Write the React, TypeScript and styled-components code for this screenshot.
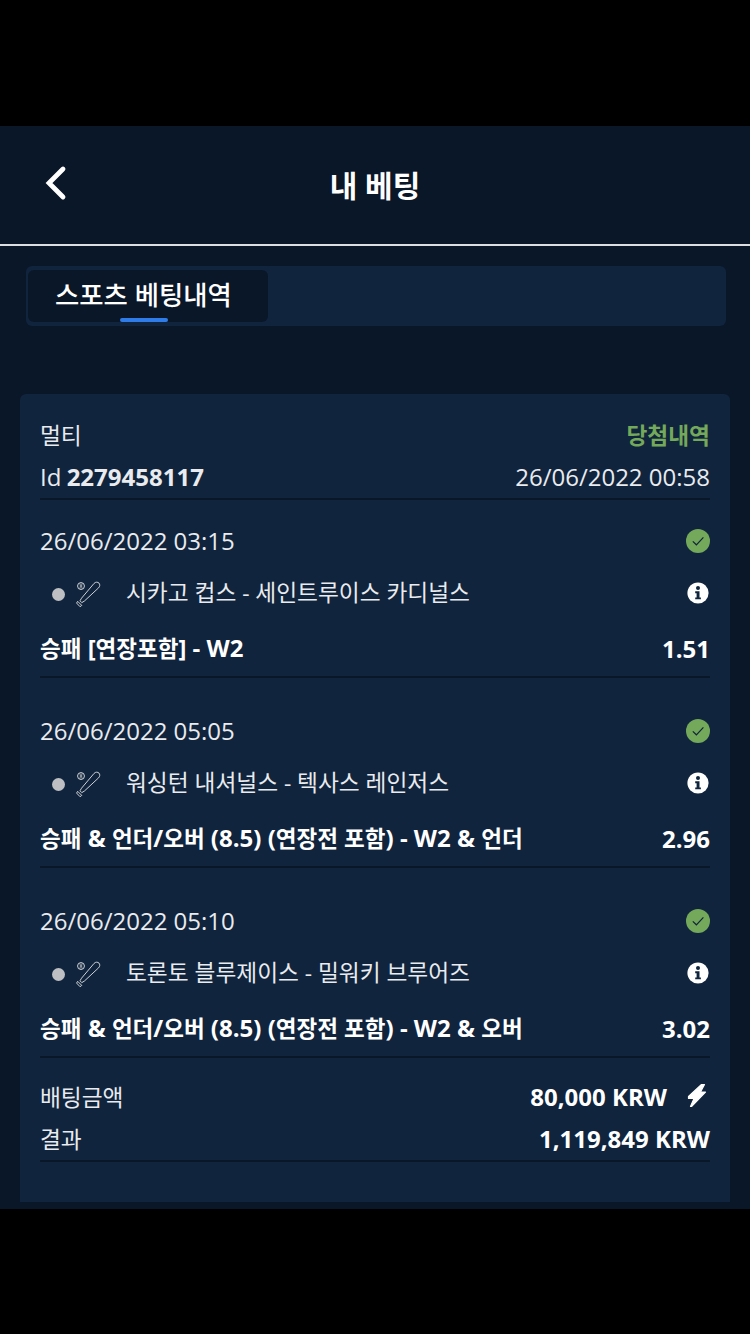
import styled, { createGlobalStyle } from 'styled-components';

const Global = createGlobalStyle`
  html, body {
    margin: 0;
    padding: 0;
    background: #000;
  }
  * {
    box-sizing: border-box;
  }
`;

const Page = styled.div`
  width: 750px;
  height: 1334px;
  padding-top: 126px;
  background: #000;
  color: #fff;
  font-family: 'Open Sans', 'Noto Sans CJK KR', sans-serif;
  font-size: 24px;
  line-height: 32px;
  overflow: hidden;
`;

const Screen = styled.div`
  height: 1083px;
  background: #0a1728;
  display: flex;
  flex-direction: column;
`;

const Header = styled.header`
  height: 120px;
  flex-shrink: 0;
  display: grid;
  grid-template-columns: 110px 1fr 110px;
  align-items: center;
  border-bottom: 2px solid #dcdee0;
`;

const BackButton = styled.div`
  display: flex;
  padding: 0 0 4px 44px;
`;

const Title = styled.h1`
  margin: 2px 0 0;
  text-align: center;
  font-size: 30px;
  font-weight: 700;
  line-height: 40px;
`;

const TabBar = styled.div`
  margin: 20px 24px 0 26px;
  height: 60px;
  padding: 4px 2px;
  flex-shrink: 0;
  border-radius: 6px;
  background: #10243d;
`;

const Tab = styled.div`
  position: relative;
  width: 240px;
  height: 52px;
  border-radius: 6px;
  background: #0a1728;
  display: flex;
  align-items: center;
  padding: 0 0 2px 27px;
  font-size: 26.4px;
  font-weight: 500;
  &::after {
    content: '';
    position: absolute;
    left: 92px;
    bottom: 0;
    width: 48px;
    height: 4px;
    border-radius: 2px;
    background: #2f7ce8;
  }
`;

const Card = styled.section`
  margin: 68px 20px 0;
  height: 808px;
  padding: 20px 20px 0;
  border-radius: 6px 6px 0 0;
  background: #10243d;
`;

const Row = styled.div<{ $h?: number; $line?: boolean }>`
  height: ${(p) => p.$h ?? 42}px;
  display: flex;
  align-items: center;
  justify-content: space-between;
  white-space: nowrap;
  ${(p) => p.$line && 'border-bottom: 2px solid #0a1728;'}
`;

const Light = styled.span`
  color: #e9ebee;
`;

const Strong = styled.b`
  margin-left: -1px;
  font-weight: 700;
`;

const Won = styled.span`
  color: #74a85a;
  font-weight: 600;
`;

const Ko = styled.span`
  font-size: 22.7px;
`;

const Bet = styled.div`
  padding-top: 20px;
  & + & {
    padding-top: 32px;
  }
`;

const MatchRow = styled.div`
  height: 60px;
  display: flex;
  align-items: center;
  padding: 0 1px 0 12px;
`;

const Dot = styled.span`
  width: 13px;
  height: 13px;
  margin-top: 4px;
  border-radius: 50%;
  background: #bdbfc2;
`;

const SportIcon = styled.svg`
  margin: 4px 0 0 9px;
  width: 28px;
  height: 28px;
  flex-shrink: 0;
`;

const MatchName = styled.span`
  margin: 1px auto 0 24px;
  color: #e9ebee;
  font-size: 22.7px;
`;

const InfoSlot = styled.span`
  display: flex;
  margin-top: 2px;
`;

const Market = styled(Row)`
  height: 56px;
  padding-bottom: 1px;
  font-weight: 700;
  ${Ko} {
    font-size: 22.5px;
  }
`;

const Totals = styled.div`
  padding-top: 18px;
`;

const Amount = styled.span`
  display: flex;
  align-items: center;
  gap: 20px;
  font-weight: 700;
`;

const BoltSlot = styled.span`
  display: flex;
  margin: -4px 3px 0 0;
`;

const bets = [
  {
    date: '26/06/2022 03:15',
    match: '시카고 컵스 - 세인트루이스 카디널스',
    market: '승패 [연장포함] - W2',
    odds: '1.51',
  },
  {
    date: '26/06/2022 05:05',
    match: '워싱턴 내셔널스 - 텍사스 레인저스',
    market: '승패 & 언더/오버 (8.5) (연장전 포함) - W2 & 언더',
    odds: '2.96',
  },
  {
    date: '26/06/2022 05:10',
    match: '토론토 블루제이스 - 밀워키 브루어즈',
    market: '승패 & 언더/오버 (8.5) (연장전 포함) - W2 & 오버',
    odds: '3.02',
  },
];

// hangul comes out wider than latin at the same size, so runs of it get their own span
const Mixed = ({ text }: { text: string }) => (
  <>
    {text.split(/([가-힣]+)/).map((part, i) => (i % 2 ? <Ko key={i}>{part}</Ko> : part))}
  </>
);

const BackIcon = () => (
  <svg width="24" height="36" viewBox="0 0 24 36" fill="none">
    <path d="M19 4 5 18l14 14" stroke="#fff" strokeWidth="4.8" strokeLinecap="round" strokeLinejoin="miter" />
  </svg>
);

const CheckIcon = () => (
  <svg width="24" height="24" viewBox="0 0 24 24">
    <circle cx="12" cy="12" r="12" fill="#74a85a" />
    <path d="M6.8 12.4l3.6 3.4 7-7.4" fill="none" stroke="#10243d" strokeWidth="1.2" />
  </svg>
);

const InfoIcon = () => (
  <svg width="22" height="22" viewBox="0 0 22 22">
    <circle cx="11" cy="11" r="10.6" fill="#fff" />
    <circle cx="11" cy="6.1" r="2" fill="#10243d" />
    <path d="M8.2 9.3h4.3v6.1h1.4v1.9H8.2v-1.9h1.4v-4.2H8.2z" fill="#10243d" />
  </svg>
);

const BaseballIcon = () => (
  <SportIcon viewBox="0 0 26 26" fill="none" stroke="#d5d7da" strokeWidth="0.9">
    <circle cx="6.5" cy="5.6" r="3.2" />
    <path d="M5.4 3.2c.7 1.5.7 3.3 0 4.8M7.6 3.2c-.7 1.5-.7 3.3 0 4.8" strokeWidth="0.7" />
    <path d="M18.6 3.2c1.4-1.6 3.6-1.4 4.6-.3s1 3-.4 4.4L9.6 19.6l-2.4 1.4-1.6-1.7 1.4-2.4z" />
    <path d="M3.4 19.8l3.8 3.8-1.6 1.2-3.2-3.4z" />
  </SportIcon>
);

const BoltIcon = () => (
  <svg width="20" height="25" viewBox="0 0 20 25">
    <path
      d="M14.5 1.5H17.5L13.5 9H18.5L4.5 23.5H3.5L7 15.5H1.5V13.5z"
      fill="#fff"
      stroke="#fff"
      strokeWidth="1.2"
      strokeLinejoin="round"
    />
  </svg>
);

export default function App() {
  return (
    <Page>
      <Global />
      <Screen>
        <Header>
          <BackButton>
            <BackIcon />
          </BackButton>
          <Title>내 베팅</Title>
        </Header>
        <TabBar>
          <Tab>스포츠 베팅내역</Tab>
        </TabBar>
        <Card>
          <Row>
            <Light>
              <Ko>멀티</Ko>
            </Light>
            <Won>
              <Ko>당첨내역</Ko>
            </Won>
          </Row>
          <Row $line $h={44}>
            <Light>
              Id <Strong>2279458117</Strong>
            </Light>
            <Light>26/06/2022 00:58</Light>
          </Row>
          {bets.map((bet) => (
            <Bet key={bet.date}>
              <Row>
                <Light>{bet.date}</Light>
                <CheckIcon />
              </Row>
              <MatchRow>
                <Dot />
                <BaseballIcon />
                <MatchName>{bet.match}</MatchName>
                <InfoSlot>
                  <InfoIcon />
                </InfoSlot>
              </MatchRow>
              <Market $line>
                <span>
                  <Mixed text={bet.market} />
                </span>
                <span>{bet.odds}</span>
              </Market>
            </Bet>
          ))}
          <Totals>
            <Row>
              <Light>
                <Ko>배팅금액</Ko>
              </Light>
              <Amount>
                80,000 KRW
                <BoltSlot>
                  <BoltIcon />
                </BoltSlot>
              </Amount>
            </Row>
            <Row $line $h={44}>
              <Light>
                <Ko>결과</Ko>
              </Light>
              <Amount>1,119,849 KRW</Amount>
            </Row>
          </Totals>
        </Card>
      </Screen>
    </Page>
  );
}
